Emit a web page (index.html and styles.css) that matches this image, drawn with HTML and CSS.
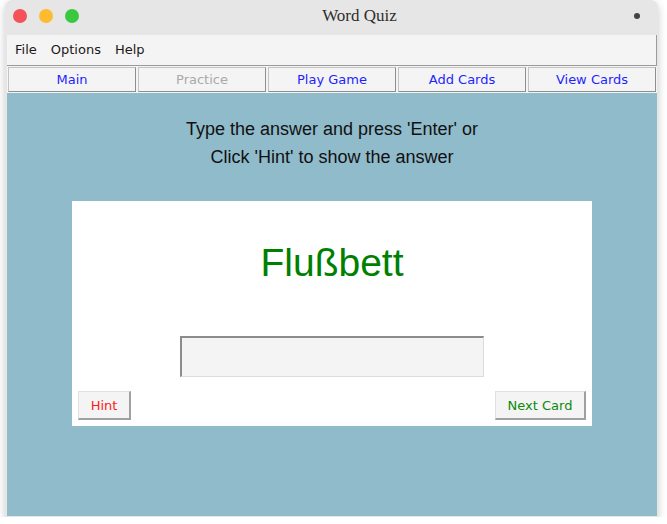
FILE: index.html
```html
<!DOCTYPE html>
<html>
<head>
<meta charset="utf-8">
<title>Word Quiz</title>
<link rel="stylesheet" href="styles.css">
</head>
<body>
<div class="window">
  <div class="titlebar">
    <div class="lights">
      <span class="light red"></span>
      <span class="light yellow"></span>
      <span class="light green"></span>
    </div>
    <div class="title">Word Quiz</div>
    <span class="dot"></span>
  </div>
  <div class="frame">
    <div class="menubar">
      <span>File</span>
      <span>Options</span>
      <span>Help</span>
    </div>
    <div class="tabs">
      <button class="tab">Main</button>
      <button class="tab disabled">Practice</button>
      <button class="tab">Play Game</button>
      <button class="tab">Add Cards</button>
      <button class="tab">View Cards</button>
    </div>
    <div class="content">
      <div class="instructions">
        <div>Type the answer and press 'Enter' or</div>
        <div>Click 'Hint' to show the answer</div>
      </div>
      <div class="card">
        <div class="word">Flußbett</div>
        <div class="entry"></div>
        <div class="actions">
          <button class="btn hint">Hint</button>
          <button class="btn next">Next Card</button>
        </div>
      </div>
    </div>
  </div>
</div>
</body>
</html>
```

FILE: styles.css
```css
html, body {
  margin: 0;
  padding: 0;
  background: #ffffff;
}

.window {
  margin-left: 5px;
  width: 653px;
  height: 517px;
  display: flex;
  flex-direction: column;
  background: #e6e6e6;
  border-radius: 8px 8px 0 0;
  box-shadow: 0 3px 9px rgba(0, 0, 0, 0.22);
  overflow: hidden;
}

.titlebar {
  height: 35px;
  flex: none;
  display: flex;
  align-items: center;
  position: relative;
  background: #e6e6e6;
}

.lights {
  display: flex;
  gap: 12px;
  padding-left: 8px;
  padding-bottom: 4px;
}

.light {
  width: 14px;
  height: 14px;
  border-radius: 50%;
  display: block;
}
.light.red { background: #f45158; }
.light.yellow { background: #fdbc2f; }
.light.green { background: #3ac741; }

.title {
  position: absolute;
  left: 0;
  right: 0;
  top: 6px;
  text-align: center;
  font-family: "Liberation Serif", "DejaVu Serif", serif;
  font-size: 17px;
  color: #2e2e2e;
  padding-left: 56px;
}

.dot {
  margin-left: auto;
  margin-right: 18px;
  margin-bottom: 4px;
  width: 6px;
  height: 6px;
  border-radius: 50%;
  background: #444;
}

.frame {
  flex: 1;
  display: flex;
  flex-direction: column;
  padding: 0 1px 1px 2px;
}

.menubar {
  height: 28px;
  flex: none;
  display: flex;
  align-items: center;
  gap: 14px;
  padding-left: 8px;
  padding-bottom: 2px;
  background: #f4f4f4;
  border-bottom: 1px solid #9a9a9a;
  border-right: 1px solid #9a9a9a;
  font-family: "DejaVu Sans", sans-serif;
  font-size: 13px;
  color: #1a1a1a;
}

.tabs {
  flex: none;
  display: grid;
  grid-template-columns: repeat(5, 1fr);
  gap: 2px;
  padding: 1px;
  background: #f4f4f4;
}

.tab {
  height: 25px;
  margin: 0;
  padding: 0;
  background: #f4f4f4;
  border: 1px solid #c4c4c4;
  border-right-color: #8e8e8e;
  border-bottom-color: #8e8e8e;
  font-family: "DejaVu Sans", sans-serif;
  font-size: 13px;
  color: #1f1fff;
  white-space: nowrap;
}

.tab.disabled {
  color: #a9a9a9;
}

.content {
  flex: 1;
  background: #8fbbcb;
  display: flex;
  flex-direction: column;
  align-items: center;
}

.instructions {
  padding-top: 22px;
  font-family: "Liberation Sans", Arial, sans-serif;
  font-size: 18px;
  line-height: 28px;
  color: #111;
  text-align: center;
}

.card {
  margin-top: 30px;
  width: 520px;
  background: #ffffff;
  display: flex;
  flex-direction: column;
  padding: 0 6px 6px;
  box-sizing: border-box;
}

.word {
  height: 124px;
  line-height: 124px;
  text-align: center;
  font-family: "Liberation Sans", Arial, sans-serif;
  font-size: 39px;
  color: #008000;
}

.entry {
  margin: 11px auto 0;
  width: 304px;
  height: 41px;
  box-sizing: border-box;
  background: #f4f4f4;
  border: 1px solid #dcdcdc;
  border-top: 2px solid #8c8c8c;
  border-left: 2px solid #8c8c8c;
}

.actions {
  margin-top: 14px;
  display: flex;
  justify-content: space-between;
}

.btn {
  height: 29px;
  margin: 0;
  padding: 0;
  background: #f4f4f4;
  border: 1px solid #e0e0e0;
  border-right: 2px solid #a0a0a0;
  border-bottom: 2px solid #a0a0a0;
  font-family: "DejaVu Sans", sans-serif;
  font-size: 13px;
  white-space: nowrap;
}

.btn.hint {
  color: #ff1a1a;
  width: 53px;
}

.btn.next {
  color: #0a8a0a;
  width: 91px;
}
```
